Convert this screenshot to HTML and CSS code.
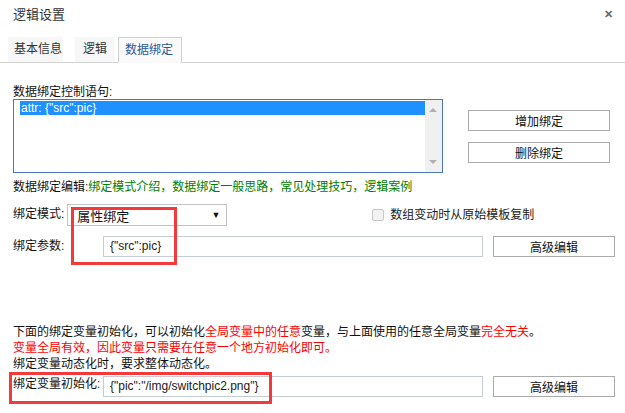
FILE: index.html
```html
<!DOCTYPE html>
<html lang="zh-CN">
<head>
    <meta charset="UTF-8">
    <title>逻辑设置</title>
    <link rel="stylesheet" href="styles.css">
</head>
<body>
    <div class="dialog">
        <div class="dialog-header">
            <span class="dialog-title">逻辑设置</span>
            <span class="dialog-close">&#x2715;</span>
        </div>
        <div class="tabs">
            <div class="tab tab-info">基本信息</div>
            <div class="tab tab-logic">逻辑</div>
            <div class="tab active">数据绑定</div>
        </div>

        <div class="panel">
            <!-- binding list -->
            <div class="list-row">
                <div class="list-col">
                    <div class="field-label">数据绑定控制语句<span class="colon">:</span></div>
                    <div class="listbox">
                        <div class="list-items">
                            <div class="list-item selected">attr: {"src":pic}</div>
                        </div>
                        <div class="scrollbar">
                            <span class="arrow-up"></span>
                            <span class="arrow-down"></span>
                        </div>
                    </div>
                </div>
                <div class="list-actions">
                    <button class="btn">增加绑定</button>
                    <button class="btn">删除绑定</button>
                </div>
            </div>

            <div class="help-line">数据绑定编辑<span class="colon">:</span><span class="link">绑定模式介绍，数据绑定一般思路，常见处理技巧，逻辑案例</span></div>

            <div class="form-row mode-row">
                <span class="row-label">绑定模式:</span>
                <div class="select">
                    <span>属性绑定</span>
                    <span class="select-arrow">&#9660;</span>
                </div>
                <label class="copy-check">
                    <span class="checkbox"></span>
                    数组变动时从原始模板复制
                </label>
            </div>

            <div class="form-row param-row">
                <span class="row-label wide">绑定参数:</span>
                <div class="text-input">{"src":pic}</div>
                <button class="btn btn-edit">高级编辑</button>
            </div>

            <div class="notes">
                <div>下面的绑定变量初始化，可以初始化<span class="warn">全局变量中的任意</span>变量，与上面使用的任意全局变量<span class="warn">完全无关</span>。</div>
                <div class="warn">变量全局有效，因此变量只需要在任意一个地方初始化即可。</div>
                <div>绑定变量动态化时，要求整体动态化。</div>
            </div>

            <div class="form-row init-row">
                <span class="row-label wide">绑定变量初始化<span class="colon">:</span></span>
                <div class="text-input">{"pic":"/img/switchpic2.png"}</div>
                <button class="btn btn-edit">高级编辑</button>
            </div>

            <div class="mark mark-mode"></div>
            <div class="mark mark-init"></div>
        </div>
    </div>
</body>
</html>
```

FILE: styles.css
```css
body {
    margin: 0;
    background-color: #fff;
    font-family: "Liberation Sans", "Noto Sans CJK SC", sans-serif;
    font-size: 12px;
    color: #111;
}
.dialog {
    width: 625px;
    height: 413px;
    position: relative;
}
.dialog-header {
    height: 37px;
    display: flex;
    justify-content: space-between;
    align-items: flex-start;
    padding: 6px 12px 0 13px;
    box-sizing: border-box;
}
.dialog-title {
    font-size: 13px;
    line-height: 18px;
    color: #333;
}
.dialog-close {
    font-size: 11px;
    font-weight: bold;
    line-height: 16px;
    color: #666;
}
.tabs {
    display: flex;
    align-items: flex-end;
    height: 25px;
    padding-left: 8px;
    border-bottom: 1px solid #d4d4d4;
}
.tab {
    height: 25px;
    box-sizing: border-box;
    line-height: 24px;
    background-color: #f7f7f7;
    color: #333;
    font-size: 12px;
    white-space: nowrap;
}
.tab-info {
    width: 55px;
    padding-left: 6px;
}
.tab-logic {
    width: 40px;
    padding-left: 8px;
    margin-left: 12px;
}
.tab.active {
    width: 64px;
    padding-left: 6px;
    margin-left: 3px;
    height: 26px;
    margin-bottom: -1px;
    border: 1px solid #d0d0d0;
    border-bottom: 1px solid #fafafa;
    background-color: #fafafa;
    color: #2b579a;
}
.panel {
    padding: 0 10px 0 13px;
}
.colon {
    color: #8b0000;
}
.list-row {
    display: flex;
    padding-top: 22px;
}
.list-col {
    width: 430px;
}
.field-label {
    line-height: 14px;
}
.listbox {
    display: flex;
    height: 74px;
    box-sizing: border-box;
    border: 1px solid #4a78b8;
}
.list-items {
    flex: 1;
    padding: 1px 0 0 6px;
}
.list-item {
    line-height: 14px;
    padding-left: 1px;
}
.list-item.selected {
    background-color: #1e90ff;
    color: #fff;
}
.scrollbar {
    width: 17px;
    background-color: #f0f0f0;
    position: relative;
}
.arrow-up,
.arrow-down {
    position: absolute;
    left: 4px;
    width: 0;
    height: 0;
    border-left: 4px solid transparent;
    border-right: 4px solid transparent;
}
.arrow-up {
    top: 8px;
    border-bottom: 4px solid #b0b0b0;
}
.arrow-down {
    bottom: 8px;
    border-top: 4px solid #b0b0b0;
}
.list-actions {
    display: flex;
    flex-direction: column;
    gap: 11px;
    margin-left: 25px;
    padding-top: 25px;
}
.btn {
    width: 142px;
    height: 21px;
    padding: 0;
    border: 1px solid #ababab;
    background-color: #fff;
    font-family: "Liberation Sans", "Noto Sans CJK SC", sans-serif;
    font-size: 12px;
    color: #111;
    border-radius: 0;
}
.help-line {
    margin-top: 7px;
    line-height: 14px;
}
.link {
    color: #008000;
}
.form-row {
    display: flex;
    align-items: flex-start;
}
.row-label {
    line-height: 14px;
    padding-top: 3px;
}
.row-label.wide {
    width: 90px;
}
.mode-row {
    margin-top: 10px;
}
.select {
    width: 160px;
    height: 22px;
    box-sizing: border-box;
    border: 1px solid #c3c3c3;
    display: flex;
    justify-content: space-between;
    align-items: center;
    padding: 0 6px 0 9px;
    margin-left: 3px;
    font-size: 13px;
}
.select-arrow {
    font-size: 9px;
}
.copy-check {
    display: flex;
    align-items: center;
    gap: 6px;
    margin-left: 145px;
    margin-top: 4px;
    color: #222;
    line-height: 14px;
}
.checkbox {
    width: 10px;
    height: 10px;
    border: 1px solid #c8c8c8;
    border-radius: 2px;
    background-color: #f2f2f2;
}
.param-row {
    margin-top: 10px;
}
.text-input {
    width: 380px;
    height: 21px;
    box-sizing: border-box;
    border: 1px solid #c5ccd3;
    padding-left: 6px;
    line-height: 19px;
    color: #1a1a1a;
}
.btn-edit {
    width: 122px;
    margin-left: 10px;
}
.notes {
    margin-top: 67px;
    line-height: 16px;
}
.warn {
    color: #ff0000;
}
.init-row {
    margin-top: 4px;
}
.init-row .row-label {
    padding-top: 1px;
}
.mark {
    position: absolute;
    border: 3px solid #f23a3a;
    box-sizing: border-box;
}
.mark-mode {
    left: 71px;
    top: 207px;
    width: 106px;
    height: 58px;
}
.mark-init {
    left: 9px;
    top: 372px;
    width: 263px;
    height: 32px;
}
```
